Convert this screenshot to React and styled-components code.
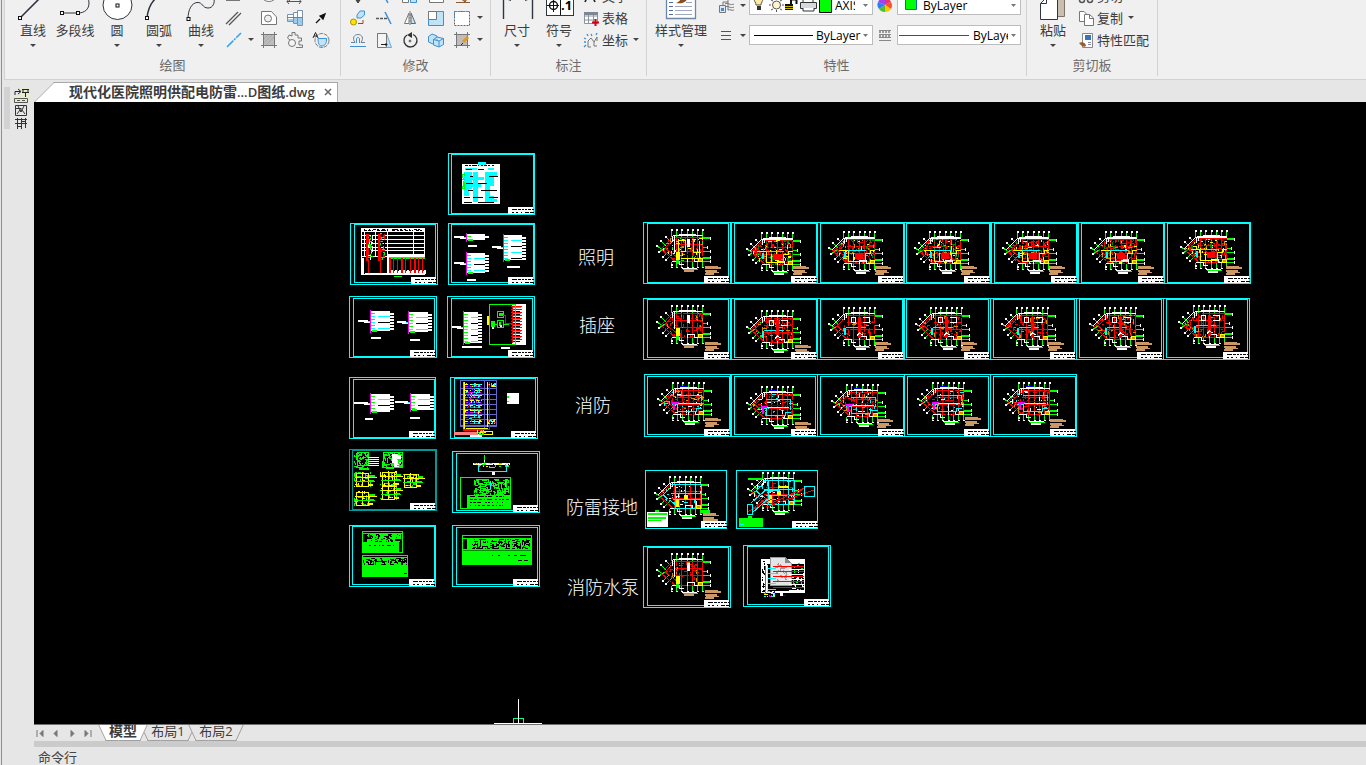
import React, { useState } from "react";
import styled, { createGlobalStyle, css } from "styled-components";

const GlobalStyle = createGlobalStyle`
  * {
    box-sizing: border-box;
  }
  body {
    margin: 0;
    background: #e6e6e6;
    color: #3c3c3c;
    font: 13px/18px "Open Sans", "Noto Sans CJK SC", sans-serif;
  }
  button, select {
    font: inherit;
    color: inherit;
  }
  svg {
    display: block;
  }
`;

const Shell = styled.div`
  display: flex;
  flex-direction: column;
  min-height: 100vh;
  padding-left: 2px;
  background: #e6e6e6;
  box-shadow: inset 1px 0 #e6e6e6, inset 2px 0 #8f8f8f;
`;

/* ribbon */
const RibbonBar = styled.header`
  display: flex;
  height: 80px;
  margin-left: 2px;
  overflow: hidden;
  background: #f0f0f0;
  border-left: 1px solid #d2d2d2;
  border-bottom: 1px solid #d2d2d2;
`;
const Group = styled.section`
  display: flex;
  flex-direction: column;
  justify-content: flex-end;
  flex: none;
  margin-bottom: 3px;
  border-right: 1px solid #d2d2d2;
`;
const GroupBody = styled.div`
  display: flex;
  align-items: flex-end;
  padding: 0 ${(p) => p.$right}px 0 ${(p) => p.$left}px;
`;
const GroupTitle = styled.h2`
  height: 25px;
  margin: 0;
  font-size: 13px;
  font-weight: 400;
  line-height: 29px;
  text-align: center;
  color: #6b6b6b;
`;
const PlainButton = styled.button`
  padding: 0;
  border: 0;
  background: none;
  white-space: nowrap;
`;
const BigButton = styled(PlainButton)`
  display: flex;
  flex-direction: column;
  align-items: center;
  width: ${(p) => p.$width || 42}px;
  line-height: 17px;
`;
const Caret = styled.span`
  display: flex;
  align-items: center;
  justify-content: center;
  width: ${(p) => p.$width || 10}px;
  height: ${(p) => p.$height || 12}px;
  &::after {
    content: "";
    border: 3px solid transparent;
    border-top: 3px solid #444;
    border-bottom: 0;
  }
`;
const CaretGap = styled.span`
  height: 12px;
`;
const ToolGrid = styled.div`
  display: grid;
  grid-template-columns: ${(p) => p.$columns};
  grid-auto-rows: 22px;
`;
const ToolButton = styled(PlainButton)`
  display: flex;
  align-items: center;
  justify-content: center;
`;
const TextTools = styled.div`
  display: flex;
  flex-direction: column;
  margin-left: ${(p) => p.$left}px;
`;
const TextTool = styled(PlainButton)`
  display: flex;
  align-items: center;
  gap: 3px;
  height: 22px;
  padding-bottom: 1px;
`;
const PropGrid = styled.div`
  display: grid;
  grid-template-columns: 22px 12px 124px 24px 124px;
  grid-auto-rows: 20px;
  row-gap: 10px;
  align-items: center;
  justify-items: center;
  padding-bottom: 6px;
`;
const Combo = styled.div`
  position: relative;
  width: 124px;
  height: 20px;
  background: #fff;
  border: 1px solid #bdbdbd;
  svg {
    position: absolute;
    left: 0;
    top: 0;
    pointer-events: none;
  }
`;
const ComboSelect = styled.select`
  width: 100%;
  height: 18px;
  padding: 0 ${(p) => p.$right}px 0 ${(p) => p.$left}px;
  border: 0;
  outline: 0;
  appearance: none;
  background: none;
  font-size: 12px;
  color: #000;
`;

/* workspace */
const Workspace = styled.main`
  display: flex;
  flex: 1;
`;
const Rail = styled.aside`
  display: flex;
  flex: none;
  gap: 3px;
  width: 32px;
  padding: 7px 0 0 2px;
`;
const Grip = styled.div`
  width: 6px;
  height: 42px;
  background: #d2d2d2;
`;
const Desk = styled.div`
  display: flex;
  flex-direction: column;
  flex: 1;
  min-width: 0;
`;
const FileTabs = styled.nav`
  display: flex;
  align-items: flex-end;
  height: 22px;
`;
const FileTab = styled.div`
  position: relative;
  z-index: 0;
  display: flex;
  align-items: center;
  gap: 7px;
  height: 20px;
  padding: 0 4px 0 35px;
  font-weight: 700;
  white-space: nowrap;
  &::before,
  &::after {
    content: "";
    position: absolute;
    z-index: -1;
    top: 0;
    bottom: 0;
    background: #fff;
    border-top: 1px solid #a8a8a8;
  }
  &::before {
    left: 10px;
    width: 60px;
    border-left: 1px solid #a8a8a8;
    transform: skewX(-45deg);
  }
  &::after {
    left: 40px;
    right: 0;
    border-right: 1px solid #a8a8a8;
  }
`;
const FileName = styled.span`
  font-size: 14px;
`;
const Latin = styled.span`
  font-size: 13px;
  font-weight: 600;
`;
const CloseButton = styled(PlainButton)`
  display: flex;
  width: 12px;
  height: 12px;
  align-items: center;
  justify-content: center;
`;
const Canvas = styled.div`
  position: relative;
  flex: 1;
  overflow: hidden;
  background: #000;
`;
const Placed = styled.div`
  position: absolute;
  left: ${(p) => p.$x}px;
  top: ${(p) => p.$y}px;
`;
const CanvasLabel = styled(Placed)`
  color: #fff;
  font-family: "Noto Sans CJK SC", sans-serif;
  font-size: 18px;
  font-weight: 300;
  line-height: 24px;
  white-space: nowrap;
`;
const Crosshair = styled.div`
  position: absolute;
  left: 460px;
  bottom: 0;
`;
const LayoutBar = styled.nav`
  display: flex;
  height: 17px;
  border-top: 1px solid #6f6f6f;
`;
const Pager = styled.div`
  display: flex;
  width: 68px;
`;
const PagerButton = styled(PlainButton)`
  display: flex;
  align-items: center;
  width: 16px;
`;
const LayoutTab = styled(PlainButton)`
  position: relative;
  z-index: ${(p) => (p.$active ? 1 : 0)};
  width: ${(p) => (p.$active ? 42 : 48)}px;
  height: 16px;
  padding-bottom: 4px;
  line-height: 12px;
  ${(p) =>
    p.$active &&
    css`
      font-size: 14px;
      font-weight: 700;
    `}
  &::before,
  &::after {
    content: "";
    position: absolute;
    z-index: -1;
    top: 0;
    bottom: 0;
    background: ${(p) => (p.$active ? "#fff" : "#e6e6e6")};
    border-bottom: 1px solid #a0a0a0;
  }
  &::before {
    left: 0;
    right: 20px;
    border-left: 1px solid #a0a0a0;
    transform: skewX(25deg);
  }
  &::after {
    left: 20px;
    right: 0;
    border-right: 1px solid #a0a0a0;
    transform: skewX(-25deg);
  }
`;
const Splitter = styled.div`
  height: 6px;
  background: #cbcbcb;
`;
const CommandLine = styled.footer`
  height: 18px;
  padding-left: 4px;
  line-height: 20px;
  color: #444;
`;

/* ---------- icons ---------- */
const INK = "#2f3640";
const BLUE = "#3f8fd2";
const PALE = "#bfe4f8";

const Icon = ({ size = 18, children }) => (
  <svg width={size} height={size} viewBox={`0 0 ${size} ${size}`} fill="none" stroke="#777" strokeWidth="1" aria-hidden="true">
    {children}
  </svg>
);
const Node = ({ x, y }) => <rect x={x - 1.5} y={y - 1.5} width="3" height="3" fill="#fff" stroke="#111" />;

const big = {
  line: (
    <>
      <path d="M4 30L26 8" stroke={INK} strokeWidth="1.6" />
      <Node x={4} y={30} />
    </>
  ),
  polyline: (
    <>
      <path d="M4 25H20C27 25 31 21 31 15C31 11 29 8 26 6" stroke={INK} />
      <Node x={4} y={25} />
      <Node x={20} y={25} />
    </>
  ),
  circle: (
    <>
      <circle cx="17.5" cy="17" r="14.5" fill="#fff" stroke={INK} />
      <Node x={17.5} y={17.5} />
    </>
  ),
  arc: (
    <>
      <path d="M5 30C6 20 10 12 18 7" stroke={INK} strokeWidth="1.5" />
      <Node x={5} y={30} />
    </>
  ),
  curve: (
    <>
      <path d="M4 31C4 21 8 15 13 14.500C19 14 18 20 24 20C29 20 31 15 30 10" stroke={INK} />
      <Node x={4.500} y={31} />
    </>
  ),
  dimension: (
    <>
      <path d="M3.500 12V31M32.500 12V31" stroke={INK} strokeWidth="1.400" />
      <path d="M5 11L11 13V9ZM31 11L25 13V9Z" fill={INK} stroke="none" />
    </>
  ),
  symbol: (
    <>
      <rect x="4.500" y="0.500" width="27" height="27" fill="#fff" stroke={INK} />
      <path d="M18.500 1V27M5 17.500H17M11.500 11V24" stroke="#111" />
      <circle cx="11.500" cy="17.500" r="4" stroke="#111" strokeWidth="1.400" />
      <text x="19" y="22" fill="#000" stroke="none" fontSize="13" fontWeight="700">
        .1
      </text>
    </>
  ),
  styles: (
    <>
      <path d="M2.500 0V30.500H31.500V0" fill="#fff" stroke="#6d87a8" strokeWidth="1.300" />
      <path d="M5 14.500H9M5 18.500H9M5 22.500H9M5 26.500H9" stroke="#4d6a9a" />
      <path d="M22 14.500H28M11 18.500H28M11 22.500H28M11 26.500H28" stroke="#9fa8bd" />
      <path d="M12 15C16 16 22 15 23 11L17 9C17 12 15 14 12 15Z" fill="#8a4b1f" stroke="none" />
    </>
  ),
  paste: (
    <>
      <path d="M20 4H28.500V28.500H20Z" fill="#c9bfb0" stroke="#7d7468" />
      <path d="M4.500 15.500L10.500 9.500H21.500V31.500H4.500Z" fill="#fff" stroke={INK} />
      <path d="M4.500 15.500H10.500V9" stroke={INK} />
    </>
  ),
};

const small = {
  rect: <rect x="1.500" y="5.500" width="13" height="8" fill="#fff" />,
  ellipse: <ellipse cx="9" cy="9" rx="7" ry="5.500" fill="#fff" />,
  axis: <path d="M3.500 1V14M1 14.500H15M3 12L1 14.500L3 17M13 12L15 14.500L13 17" stroke="#555" />,
  doubleLine: <path d="M1 15L13 3M4 16L16 4" stroke="#555" strokeWidth="1.300" />,
  region: (
    <>
      <path d="M1.500 2.500H11.500L16.500 8V15.500H1.500Z" fill="#fff" />
      <circle cx="8" cy="9.500" r="3.500" fill="#f0f0f0" />
    </>
  ),
  bolt: (
    <>
      <path d="M1.500 5.500H7.500V12.500H1.500ZM7.500 3.500H11.500V14.500H7.500ZM11.500 1.500H16.500V16.500H11.500Z" fill="#fff" stroke="#7c93ab" />
      <path d="M2 10H7V12H2ZM8 9H11V14H8ZM12 9H16V16H12Z" fill="#9cccec" stroke="none" />
      <path d="M1 8.500H17" stroke={BLUE} />
    </>
  ),
  pointer: <path d="M4 14L8 10M8 7L13 5L11 10Z" fill="#111" stroke="#111" strokeWidth="1.300" />,
  centerLine: <path d="M2 16L16 2" stroke="#38a5e8" strokeWidth="1.600" strokeDasharray="9 1 2 1" />,
  hatch: (
    <>
      <path d="M3 3H15V10C15 13 13 15 10 15H3Z" fill="#bcbcbc" stroke="none" />
      <path d="M1 3.500H17M1 14.500H17M3.500 1V17M14.500 1V17" stroke="#777" />
      <path d="M4 8L8 4M4 12L12 4M6 14L14 6" stroke="#a8a8a8" />
    </>
  ),
  gear: (
    <>
      <path d="M6 1.500H9V4H12V7H15.500V10H13V14H16.500V16.500H10M6 1.500V5L3 4L1.500 7L4 9" />
      <circle cx="6" cy="12" r="3.500" fill="#f4f4f4" />
    </>
  ),
  revcloud: (
    <>
      <circle cx="10" cy="9.500" r="7" strokeDasharray="4 1" />
      <path d="M6 7.500H14.500V9C14.500 13 12 15.500 9 15C7 14.500 6 12 6 7.500Z" fill={PALE} stroke={BLUE} />
      <path d="M1 7L3.500 1.500L6 7M2 5H5" stroke="#222" />
    </>
  ),
  move: <path d="M9 2V15M7 13L9 16L11 13Z" stroke="#444" fill="#444" />,
  trim: <path d="M7 5L13 16" stroke={BLUE} strokeWidth="1.500" />,
  array: (
    <>
      <path d="M1.500 9.500H7.500V15.500H1.500Z" fill="#fff" />
      <path d="M9.500 9.500H15.500V15.500H9.500Z" fill={PALE} stroke={BLUE} />
    </>
  ),
  box: <path d="M2.500 4.500H16.500V15.500H2.500Z" fill="#fff" />,
  brush: <path d="M3 15.500H17M6 10L12 15L14 12L9 7Z" stroke="#8a5a33" fill="#b5743c" />,
  copyObj: (
    <>
      <circle cx="4.500" cy="13" r="3" fill="#ffe600" stroke="#a89000" />
      <path d="M8 6L11 2H15.500V6L12 9H8Z" fill={PALE} stroke={BLUE} />
      <path d="M9 14.500H14V11" stroke="#b03a2e" />
    </>
  ),
  extend: (
    <>
      <path d="M1 9.500H12" stroke="#555" strokeWidth="1.500" strokeDasharray="3 1" />
      <path d="M10 3L16 15" stroke={BLUE} strokeWidth="1.500" />
    </>
  ),
  mirror: (
    <>
      <path d="M8 4V14.500H3.500Z" fill="#fff" />
      <path d="M10 4V14.500H14.500Z" fill={PALE} stroke="#666" />
      <path d="M9 2V16" strokeDasharray="2 1" />
    </>
  ),
  scale: (
    <>
      <path d="M1.500 2.500H16.500V16.500H1.500Z" fill={PALE} stroke={BLUE} />
      <path d="M1.500 2.500H9.500V10.500H1.500Z" fill="#fff" />
    </>
  ),
  select: (
    <>
      <path d="M1.500 2.500H16.500V16.500H1.500Z" fill="#fff" stroke="#666" strokeDasharray="2 1" />
      <path d="M1 2.500H17M1.500 2V8" stroke={BLUE} strokeDasharray="3 1" />
    </>
  ),
  offset: (
    <>
      <path d="M2 11.500H6C3 7 5 3.500 9 3.500C13 3.500 15 7 12 11.500H16" stroke="#6f8296" />
      <path d="M1 15.500H17M7.500 12V8C7.500 6 10.500 6 10.500 8V12" stroke={BLUE} />
    </>
  ),
  stretch: (
    <>
      <path d="M2.500 2.500H11.500L16.500 16.500H2.500Z" fill={PALE} stroke="#6aaed6" />
      <path d="M2.500 2.500H11.500V16.500H2.500Z" fill="#f4f4f4" />
      <path d="M6 13.500H12M10.500 12L12 13.500L10.500 15" stroke="#222" />
    </>
  ),
  rotate: (
    <>
      <path d="M6 4A6.500 6.500 0 1 0 12 3.500" stroke="#333" strokeWidth="1.300" />
      <path d="M11 1L6 4L11 7Z" fill="#333" stroke="none" />
      <circle cx="9" cy="10" r="1" fill="#333" />
    </>
  ),
  solids: (
    <>
      <path d="M1.500 5.500L5 3L10 5V11L6 13L1.500 11Z" fill={PALE} stroke={BLUE} />
      <path d="M6.500 8.500L10 6L16.500 7.500V13.500L12 16L6.500 14ZM6.500 8.500L12 10L16.500 7.500M12 10V16" fill={PALE} stroke={BLUE} />
    </>
  ),
  hatchEdit: (
    <>
      <path d="M3 3H15V15H3Z" fill="#bdbdbd" stroke="none" />
      <path d="M1 3.500H17M1 14.500H17M3.500 1V17M14.500 1V17" stroke="#777" />
      <path d="M10 11L15 6" stroke="#e09a20" strokeWidth="3" />
      <path d="M8 14L10 12" stroke="#222" />
    </>
  ),
};

const text16 = {
  textIcon: <path d="M2 14L7 3L12 14M4 9H10" stroke="#222" strokeWidth="1.600" />,
  table: (
    <>
      <path d="M1.500 2.500H14.500V13.500H1.500ZM1 6H15M1 10H15M5.500 3V13M10.500 3V13" fill="#fff" stroke="#8a94a0" />
      <path d="M1 3.500H15" stroke="#7d8794" strokeWidth="3" />
      <path d="M9 12.500H16M12.500 9V16" stroke="#d0021b" strokeWidth="2" />
    </>
  ),
  coord: (
    <>
      <path d="M5 15V9L8 6L11 10L14 5M14 5V9M5 15H8M11 10V14H14" stroke="#777" />
      <path d="M4 2L5 4M8 2L9 4M14 1L13 3M1 6L3 7M1 10L3 10M1 15L3 13" stroke={BLUE} strokeWidth="1.300" />
    </>
  ),
  cut: (
    <>
      <circle cx="4" cy="12" r="2.500" stroke="#555" strokeWidth="1.500" />
      <circle cx="12" cy="12" r="2.500" stroke="#555" strokeWidth="1.500" />
      <path d="M5 10L12 1M11 10L4 1" stroke="#555" strokeWidth="1.500" />
    </>
  ),
  copy: (
    <>
      <path d="M1.500 1.500H6L9.500 5V11.500H1.500Z" fill="#fff" />
      <path d="M6.500 4.500H11.500L15.500 8V15.500H6.500Z" fill="#fff" />
      <path d="M11.500 4.500V8.500H15.500" />
    </>
  ),
  match: (
    <>
      <path d="M4.500 1.500H14.500V15.500H4.500Z" fill="#fff" stroke="#888" />
      <path d="M7 3H13V8H7Z" fill="#3676b8" stroke="none" />
      <path d="M10 10.500H13M10 12.500H13" stroke="#88a" />
      <path d="M1 11C4 9 8 11 8 14C5 16 3 13 1 11Z" fill="#9b5a26" stroke="none" />
    </>
  ),
};

const drawTools = ["rect", null, "ellipse", "axis", null, "doubleLine", null, "region", "bolt", "pointer", "centerLine", "caret", "hatch", "gear", "revcloud"];
const modifyTools = ["move", "trim", "array", "box", "brush", null, "copyObj", "extend", "mirror", "scale", "select", "caret", "offset", "stretch", "rotate", "solids", "hatchEdit", "caret"];

const Tools = ({ items, columns }) => (
  <ToolGrid $columns={columns}>
    {items.map((name, i) => {
      if (!name) return <span key={i} />;
      if (name === "caret") return <Caret key={i} $height={20} />;
      return (
        <ToolButton key={i} aria-label={name}>
          <Icon>{small[name]}</Icon>
        </ToolButton>
      );
    })}
  </ToolGrid>
);

const BigTool = ({ icon, label, caret = true, width }) => (
  <BigButton $width={width}>
    <Icon size={34}>{big[icon]}</Icon>
    {label}
    {caret ? <Caret /> : <CaretGap />}
  </BigButton>
);

const LabelTool = ({ icon, label, caret }) => (
  <TextTool>
    <Icon size={16}>{text16[icon]}</Icon>
    {label}
    {caret && <Caret />}
  </TextTool>
);

const PropCombo = ({ label, value, left, right, children }) => (
  <Combo>
    <ComboSelect aria-label={label} $left={left} $right={right}>
      <option>{value}</option>
    </ComboSelect>
    <svg width="122" height="18" viewBox="0 0 122 18" fill="none" aria-hidden="true">
      {children}
      <path d="M113 8H118L115.500 11Z" fill="#777" />
    </svg>
  </Combo>
);

const Ribbon = () => (
  <RibbonBar>
    <Group>
      <GroupBody $left={7} $right={6}>
        <BigTool icon="line" label="直线" />
        <BigTool icon="polyline" label="多段线" caret={false} />
        <BigTool icon="circle" label="圆" />
        <BigTool icon="arc" label="圆弧" />
        <BigTool icon="curve" label="曲线" />
        <Tools items={drawTools} columns="24px 10px 26px 26px 26px" />
      </GroupBody>
      <GroupTitle>绘图</GroupTitle>
    </Group>
    <Group>
      <GroupBody $left={4} $right={5}>
        <Tools items={modifyTools} columns="repeat(5, 26px) 10px" />
      </GroupBody>
      <GroupTitle>修改</GroupTitle>
    </Group>
    <Group>
      <GroupBody $left={5} $right={5}>
        <BigTool icon="dimension" label="尺寸" />
        <BigTool icon="symbol" label="符号" />
        <TextTools $left={3}>
          <LabelTool icon="textIcon" label="文字" />
          <LabelTool icon="table" label="表格" />
          <LabelTool icon="coord" label="坐标" caret />
        </TextTools>
      </GroupBody>
      <GroupTitle>标注</GroupTitle>
    </Group>
    <Group>
      <GroupBody $left={0} $right={5}>
        <BigTool icon="styles" label="样式管理" width={68} />
        <PropGrid>
          <Icon>
            <path d="M2.500 9.500H8.500V16.500H2.500Z" fill="#dfe8f2" />
            <path d="M4 12H7V15H4Z" fill={BLUE} stroke="none" />
            <path d="M6 9V6H11M8 8C11 6 13 10 17 8M8 11C11 9 13 13 17 11M11 14C13 13 15 15 17 14M11 3V14" />
          </Icon>
          <Caret />
          <PropCombo label="图层" value="AXIS" left={85} right={17}>
            <path d="M6 9C6 6 4 6 4 2C4 -2 13 -2 13 2C13 6 11 6 11 9Z" fill="#ffe9a0" stroke="#555" />
            <path d="M7 10H11V14H7Z" fill="#333" />
            <circle cx="26.500" cy="9" r="4" fill="#fff3d0" stroke="#555" />
            <path d="M26.500 2V4M26.500 14V16M19 9H21M32 9H34M21 4L23 5M30 13L32 14M21 14L23 13M30 5L32 4" stroke="#555" />
            <path d="M35 8H43V14H35Z" fill="#111" />
            <path d="M35 10.500H43M35 12.500H43" stroke="#c8b400" />
            <path d="M41 8V3.500H46.500V8" stroke="#111" strokeWidth="2" />
            <path d="M50.500 6.500H66.500V12.500H50.500Z" fill="#d5d8dc" stroke="#333" />
            <path d="M53 6V0H63V6M53 12V15H64V12" fill="#fff" stroke="#333" />
            <path d="M69.500 3.500H81.500V16.500H69.500Z" fill="#0f0" stroke="#000" />
          </PropCombo>
          <Icon>
            <g stroke="none">
              <path d="M9 9L2 6A7 7 0 0 1 9 2Z" fill="#a53df0" />
              <path d="M9 9V2A7 7 0 0 1 15 6Z" fill="#f0306a" />
              <path d="M9 9L15 6A7 7 0 0 1 15 13Z" fill="#f5532a" />
              <path d="M9 9L15 13A7 7 0 0 1 9 16Z" fill="#ffc400" />
              <path d="M9 9V16A7 7 0 0 1 3 13Z" fill="#4cc22e" />
              <path d="M9 9L3 13A7 7 0 0 1 2 6Z" fill="#2f7df0" />
            </g>
          </Icon>
          <PropCombo label="颜色" value="ByLayer" left={25} right={17}>
            <path d="M7.500 2.500H18.500V13.500H7.500Z" fill="#0f0" stroke="#0a64c8" />
          </PropCombo>
          <Icon>
            <path d="M4 5.500H14M4 9.500H14M4 13.500H14" stroke="#555" />
          </Icon>
          <Caret />
          <PropCombo label="线宽" value="ByLayer" left={66} right={10}>
            <path d="M4 9.500H63" stroke="#000" />
          </PropCombo>
          <Icon>
            <path d="M3 4.500H15M3 8.500H15M3 11.500H15M3 14.500H15" stroke="#888" />
            <path d="M3 6H15M3 10H15" stroke="#444" strokeDasharray="2 1" />
          </Icon>
          <PropCombo label="线型" value="ByLayer" left={75} right={12}>
            <path d="M1 9.500H71" stroke="#f00" />
          </PropCombo>
        </PropGrid>
      </GroupBody>
      <GroupTitle>特性</GroupTitle>
    </Group>
    <Group>
      <GroupBody $left={5} $right={8}>
        <BigTool icon="paste" label="粘贴" />
        <TextTools $left={4}>
          <LabelTool icon="cut" label="剪切" />
          <LabelTool icon="copy" label="复制" caret />
          <LabelTool icon="match" label="特性匹配" />
        </TextTools>
      </GroupBody>
      <GroupTitle>剪切板</GroupTitle>
    </Group>
  </RibbonBar>
);

/* ---------- drawings on the canvas ---------- */
const CY = "#00ffff";
const GR = "#00ff00";
const RD = "#ff0000";
const YE = "#ffff00";
const MG = "#ff00ff";
const BR = "#cc9966";
const OR = "#d99000";
const WH = "#ffffff";

const R = ({ b, c }) => <rect x={b[0]} y={b[1]} width={b[2]} height={b[3]} fill={c} />;
const Box = ({ b, c }) => (
  <rect x={b[0] + 0.5} y={b[1] + 0.5} width={b[2] - 1} height={b[3] - 1} fill="none" stroke={c} />
);
const P = ({ d, c }) => <path d={d} fill="none" stroke={c} />;

// small seeded generator, so a drawing looks the same on every render
const random = (seed) => {
  let s = seed * 7919 + 17;
  return () => {
    s = (s * 1103515245 + 12345) % 2147483648;
    return s / 2147483648;
  };
};

const Specks = ({ b, seed, colors, n, max = 4, inside }) => {
  const rnd = random(seed);
  const out = [];
  for (let i = 0; i < n; i++) {
    const x = b[0] + Math.floor(rnd() * b[2]);
    const y = b[1] + Math.floor(rnd() * b[3]);
    const len = 1 + Math.floor(rnd() * max);
    const flat = rnd() > 0.5;
    const c = colors[Math.floor(rnd() * colors.length)];
    if (inside && !inside(x, y)) continue;
    const w = flat ? Math.min(len, b[0] + b[2] - x) : 1;
    const h = flat ? 1 : Math.min(len, b[1] + b[3] - y);
    out.push(<rect key={i} x={x} y={y} width={w} height={h} fill={c} />);
  }
  return <g>{out}</g>;
};

const TitleBlock = ({ w, h }) => (
  <g>
    <R b={[w - 27, h - 8, 25, 7]} c={WH} />
    <path
      d={`M${w - 23} ${h - 5.5}h5m1 0h3m1 0h2m1 0h2m1 0h3m1 0h2M${w - 23} ${h - 2.5}h2m2 0h2m3 0h1m3 0h4m1 0h4`}
      stroke="#000"
      fill="none"
    />
  </g>
);

const axes = [28, 33, 38, 44, 49, 54, 59];
const rays = [
  [23, 15, 28, 20],
  [18, 19, 23, 24],
  [14, 24, 20, 28],
  [16, 30, 22, 26],
  [20, 35, 26, 29],
  [23, 38, 29, 32],
];
const inPlan = (x, y) => {
  if (x > 59) return false;
  const left = y < 26 ? 29 - (y - 14) : 17 + (y - 26) * 1.2;
  return x >= left;
};

const floorKinds = {
  lightA: { colors: [RD, RD, YE, YE, GR, OR, "#000"], n: 150 },
  light: { colors: [RD, RD, RD, "#000", YE, "#008a00", OR], n: 230 },
  socket: { colors: [RD, RD, "#000", OR], n: 130 },
  socketA: { colors: [RD, RD, RD, OR, "#000"], n: 80 },
  fire: { colors: [RD, RD, CY, "#000", WH, OR], n: 110 },
  ground: { colors: [CY, RD, WH, CY, "#000"], n: 60 },
};

const Plan = ({ dx = 0, dy = 0, kind, seed, notesX = 62, notesY = 44, notes = true }) => {
  const { colors, n } = floorKinds[kind];
  const first = kind === "lightA" || kind === "socketA";
  return (
    <g>
      <g transform={`translate(${dx} ${dy})`}>
        {axes.map((x) => (
          <g key={x}>
            <R b={[x, 8, 1, 7]} c={GR} />
            <R b={[x, 40, 1, 5]} c={GR} />
            <R b={[x, 7, 2, 2]} c={WH} />
            <R b={[x, 45, 2, 1]} c={WH} />
          </g>
        ))}
        {[16, 25, 29, 35, 39].map((y, i) => (
          <g key={y}>
            <R b={[60, y - (i === 0 ? 1 : 0), i === 1 ? 4 : 7, i % 3 === 0 ? 2 : 1]} c={GR} />
            <R b={[i === 1 ? 64 : 67, y - 1, 1, 3]} c={WH} />
          </g>
        ))}
        {rays.map(([x1, y1, x2, y2]) => (
          <g key={y1}>
            <P d={`M${x1} ${y1}L${x2} ${y2}`} c={GR} />
            <R b={[x1 - 1, y1 - 1, 2, 2]} c={WH} />
          </g>
        ))}
        <R b={[28, 42, 2, 2]} c={WH} />
        {/* walls */}
        <P d="M30 15L18 27L33 40" c={RD} />
        <P d="M32 16L22 26L34 35" c={kind === "ground" ? CY : RD} />
        {!first && <P d="M29 14L17 26" c={WH} />}
        <R b={[29, 15, 31, 1]} c={RD} />
        <R b={[33, 39, 27, 1]} c={RD} />
        <R b={[32, 22, 28, 1]} c={RD} />
        <R b={[30, 29, 30, 1]} c={RD} />
        {[33, 38, 44, 49, 54, 59].map((x) => (
          <R key={x} b={[x, 15, 1, 25]} c={RD} />
        ))}
        <Specks b={[16, 15, 44, 25]} seed={seed} colors={colors} n={n} inside={inPlan} />
        <P d="M30 13.500H60" c={WH} />
        <R b={[36, 12, 17, 2]} c={WH} />
        <P d="M29.500 14V20M31.500 14V18M29 39.500H36V42H41M44 40V36H51V40M52 39.500H59" c={WH} />
        {first && (
          <>
            <R b={[44, 17, 3, 8]} c={WH} />
            <R b={[31, 16, 1, 15]} c={WH} />
            <R b={[33, 30, 4, 8]} c={YE} />
            <R b={[33, 38, 3, 4]} c={GR} />
          </>
        )}
        {kind === "lightA" && <P d="M35.500 17V37M36 18.500H42V30M50.500 17V30H58M38 36.500H56V20" c={YE} />}
        {kind === "light" && (
          <>
            <R b={[40, 29, 8, 6]} c={RD} />
            <P d="M24 26.500H33V37H38V29M50 37V29H55V26H60" c={YE} />
            <R b={[33, 26, 18, 1]} c={CY} />
            <R b={[29, 28, 2, 6]} c={CY} />
            <R b={[39, 37, 12, 1]} c={YE} />
            <R b={[29, 14, 31, 1]} c={WH} />
          </>
        )}
        {kind === "socket" && (
          <>
            <R b={[31, 27, 20, 1]} c={CY} />
            <R b={[29, 28, 2, 7]} c={CY} />
            <R b={[43, 17, 3, 21]} c={RD} />
            <P d="M36 17.500H40V22H36ZM48 17.500H54V22H48M42 35.500L44.500 33L48 35" c={WH} />
          </>
        )}
        {kind === "fire" && (
          <>
            <P d="M33 20.500H57V30M28 29.500H33V36H52V33H58" c={CY} />
            <R b={[30, 26, 28, 1]} c="#0000ff" />
            <R b={[28, 27, 7, 2]} c={MG} />
            <R b={[34, 28, 22, 1]} c={YE} />
            <R b={[29, 28, 2, 7]} c={MG} />
            <R b={[36, 11, 8, 1]} c="#0000ff" />
          </>
        )}
        {kind === "ground" && (
          <>
            <P d="M30 15.500H60V39.500H33M34.500 16V39M44.500 16V30M54.500 16V39M32 30.500H60M30 24.500H60" c={CY} />
            <R b={[43, 26, 4, 4]} c={YE} />
            <R b={[35, 30, 3, 8]} c={YE} />
          </>
        )}
        <R b={[55, 36, 5, 4]} c={YE} />
        <R b={[56, 37, 3, 2]} c={OR} />
        <R b={[39, 46, 15, 1]} c={WH} />
        <R b={[40, 47, 15, 1]} c={GR} />
        <R b={[41, 48, 10, 2]} c={first ? BR : WH} />
      </g>
      {notes && (
        <g transform={`translate(${notesX} ${notesY})`}>
          <R b={[0, 0, 13, 1]} c={BR} />
          <R b={[0, 1, 16, 2]} c={BR} />
          <R b={[0, 4, 12, 2]} c={BR} />
          <R b={[1, 6, 13, 1]} c={BR} />
          <R b={[0, 7, 9, 2]} c={BR} />
        </g>
      )}
    </g>
  );
};

// distribution diagram: feeder on the left, bus bar, outgoing ways on the right
const Feeder = ({ b, lead = 11, cap }) => {
  const [x, y, w, h] = b;
  const ways = [];
  for (let i = 2; i < h - 1; i += 3) ways.push(i);
  return (
    <g>
      <R b={[x, y, w - 4, h]} c={WH} />
      {ways.map((i) => (
        <g key={i}>
          <R b={[x + w - 4, y + i, 4, 2]} c={WH} />
          <R b={[x + 1, y + i, 4, 1]} c={i % 2 ? CY : GR} />
          {i % 3 === 2 && i % 2 === 1 && <R b={[x + 8, y + i, w - 12, 1]} c={i % 4 === 1 ? CY : "#000"} />}
        </g>
      ))}
      <R b={[x + 2, y + h - 1, 5, 2]} c={GR} />
      <R b={[x, y - 1, 1, h + 3]} c={MG} />
      <R b={[x - lead, y + Math.floor(h / 2) - 1, lead - 2, 2]} c={WH} />
      <R b={[x - 6, y + Math.floor(h / 2) + 1, 6, 1]} c={WH} />
      <R b={[x - 2, y + Math.floor(h / 2), 2, 1]} c={CY} />
      {cap && <R b={cap} c={WH} />}
    </g>
  );
};

const Dashes = ({ b, rows, seed }) => {
  const rnd = random(seed);
  const out = [];
  for (let r = 0; r < rows; r++) {
    const y = b[1] + Math.floor((r * b[3]) / rows);
    for (let x = b[0]; x < b[0] + b[2] - 3; x += 3 + Math.floor(rnd() * 3)) {
      out.push(<rect key={`${r}-${x}`} x={x} y={y} width={1 + Math.floor(rnd() * 3)} height="1" fill="#000" />);
    }
  }
  return <g>{out}</g>;
};

const Cabinet = ({ x, y, seed }) => (
  <g>
    <Specks b={[x, y, 17, 15]} seed={seed} colors={[GR, GR, YE]} n={36} max={4} />
    <Box b={[x + 2, y + 1, 13, 14]} c={YE} />
    <R b={[x + 8, y, 1, 15]} c={YE} />
    <R b={[x + 1, y + 5, 22, 1]} c={YE} />
    <R b={[x + 1, y + 9, 20, 1]} c={GR} />
    <R b={[x + 16, y + 3, 5, 2]} c={GR} />
    <R b={[x + 15, y + 8, 5, 2]} c={GR} />
    <R b={[x + 15, y + 12, 4, 2]} c={YE} />
  </g>
);

const leftArt = {
  list: (
    <>
      <R b={[14, 11, 38, 40]} c={WH} />
      <R b={[30, 9, 8, 3]} c={CY} />
      <R b={[16, 19, 8, 24]} c={CY} />
      <R b={[25, 19, 5, 30]} c={CY} />
      <R b={[24, 24, 12, 3]} c={CY} />
      <R b={[24, 31, 9, 3]} c={CY} />
      <R b={[37, 19, 9, 27]} c={CY} />
      <R b={[40, 19, 9, 4]} c={CY} />
      <R b={[37, 46, 12, 3]} c={CY} />
      <R b={[17, 15, 12, 2]} c={CY} />
      <R b={[40, 15, 6, 2]} c={CY} />
      <R b={[42, 33, 4, 10]} c={WH} />
      <R b={[21, 36, 4, 10]} c={WH} />
      <Specks b={[14, 20, 3, 16]} seed={3} colors={[GR]} n={20} />
      <Dashes b={[17, 12, 34, 1]} rows={1} seed={4} />
      <path d="M18 16.500h6m6 0h6M22 23.500h3m16 0h9M18 30.500h7m5 0h9M20 37.500h5m8 0h16M16 44.500h6m3 0h10m6 0h9M16 49.500h8m6 0h16" stroke="#000" />
    </>
  ),
  schedule: (
    <>
      <Box b={[11, 5, 64, 47]} c={WH} />
      {[8, 12, 16, 20, 24, 27, 33].map((y) => (
        <R key={y} b={[11, y, 64, 1]} c={WH} />
      ))}
      {[14, 25, 37, 63].map((x) => (
        <R key={x} b={[x, 5, 1, 29]} c={WH} />
      ))}
      <R b={[12, 35, 2, 16]} c={WH} />
      <R b={[15, 50, 22, 1]} c={WH} />
      <R b={[37, 31, 37, 20]} c={WH} />
      <R b={[12, 6, 62, 2]} c={WH} />
      <Dashes b={[14, 6, 60, 2]} rows={2} seed={8} />
      <R b={[16, 11, 3, 27]} c={RD} />
      <R b={[28, 11, 3, 27]} c={RD} />
      <R b={[18, 38, 1, 12]} c={RD} />
      <R b={[30, 38, 1, 12]} c={RD} />
      <Specks b={[18, 10, 5, 27]} seed={11} colors={[GR, GR, WH, "#000"]} n={50} />
      <Specks b={[30, 10, 5, 27]} seed={12} colors={[GR, GR, RD, "#000"]} n={50} />
      <R b={[39, 34, 36, 14]} c="#000" />
      <R b={[39, 34, 36, 2]} c={GR} />
      {[39, 43, 47, 51, 55, 60, 64, 68, 72].map((x, i) => (
        <g key={x}>
          <R b={[x, 35, i % 3 ? 1 : 2, 15]} c={RD} />
          <R b={[x + 2, 47, 2, 4]} c={WH} />
        </g>
      ))}
      <Dashes b={[38, 29, 36, 1]} rows={1} seed={6} />
      <R b={[44, 53, 8, 1]} c={GR} />
    </>
  ),
  feeders3: (
    <>
      <Feeder b={[18, 11, 23, 6]} lead={12} cap={[20, 22, 9, 2]} />
      <Feeder b={[18, 30, 23, 20]} lead={12} cap={[19, 56, 9, 2]} />
      <Feeder b={[55, 12, 23, 25]} lead={11} cap={[59, 43, 13, 2]} />
    </>
  ),
  feeders2: (
    <>
      <Feeder b={[21, 15, 24, 20]} lead={12} cap={[22, 41, 10, 2]} />
      <Feeder b={[59, 16, 24, 20]} lead={11} cap={[61, 43, 10, 2]} />
    </>
  ),
  control: (
    <>
      <Feeder b={[16, 16, 19, 31]} lead={11} cap={[15, 50, 20, 2]} />
      <R b={[65, 8, 14, 41]} c={WH} />
      <R b={[63, 13, 10, 33]} c="#000" />
      {[10, 13, 16, 19, 22, 25, 28, 31, 34, 37, 40, 43].map((y) => (
        <g key={y}>
          <R b={[64, y, 11, 1]} c={RD} />
          <R b={[66, y + 1, 8, 1]} c={y % 2 ? WH : GR} />
        </g>
      ))}
      <R b={[65, 10, 1, 37]} c={RD} />
      <Box b={[42, 8, 27, 41]} c={GR} />
      <Box b={[50, 15, 7, 7]} c={GR} />
      <Box b={[50, 24, 7, 8]} c={GR} />
      <R b={[52, 17, 4, 3]} c={GR} />
      <R b={[52, 26, 2, 4]} c={GR} />
      <R b={[53, 29, 2, 2]} c={WH} />
      <P d="M56 19.500H58.500V27.500H65" c={RD} />
      <P d="M47 28.500H50M57 28.500H62" c={GR} />
      <R b={[40, 20, 2, 9]} c={YE} />
      <R b={[44, 25, 4, 6]} c={GR} />
      <R b={[45, 31, 2, 2]} c={WH} />
      <R b={[54, 51, 9, 2]} c={WH} />
    </>
  ),
  feeders2b: (
    <>
      <Feeder b={[21, 17, 24, 18]} lead={16} cap={[16, 41, 8, 2]} />
      <Feeder b={[61, 17, 24, 16]} lead={15} cap={[61, 40, 10, 2]} />
    </>
  ),
  system: (
    <>
      <Box b={[10, 3, 37, 47]} c="#6666cc" />
      {[7, 13, 18, 23, 28, 33, 38, 44].map((y) => (
        <g key={y}>
          <R b={[10, y + 4, 37, 1]} c="#6666cc" />
          <R b={[15, y, 17, 1]} c={YE} />
          <R b={[15, y + 2, 16, 1]} c={MG} />
          <R b={[18, y, 2, 3]} c="#0000ff" />
          <R b={[24, y - 1, 1, 4]} c={CY} />
          <R b={[28, y, 2, 3]} c={CY} />
        </g>
      ))}
      <Specks b={[15, 6, 16, 40]} seed={31} colors={[CY, "#0000ff", RD, MG, YE, "#000"]} n={80} max={3} />
      <R b={[13, 5, 1, 47]} c={CY} />
      <R b={[14, 5, 1, 47]} c={YE} />
      <R b={[34, 4, 1, 48]} c="#6666cc" />
      <R b={[37, 5, 1, 45]} c={YE} />
      <R b={[39, 5, 1, 45]} c={RD} />
      <Specks b={[38, 6, 8, 4]} seed={32} colors={[CY, YE, RD]} n={16} />
      <Specks b={[38, 42, 8, 5]} seed={33} colors={[CY, YE, RD]} n={16} />
      <P d="M13 52.500H39V49M13 53.500H33" c={RD} />
      <R b={[16, 51, 22, 1]} c={YE} />
      <R b={[4, 55, 24, 3]} c="#ff8080" />
      <Box b={[30, 54, 13, 4]} c={YE} />
      <R b={[20, 58, 12, 2]} c={WH} />
      <Specks b={[27, 53, 9, 5]} seed={34} colors={[CY, GR, YE, WH]} n={16} />
      <R b={[57, 16, 12, 11]} c={WH} />
      <R b={[57, 19, 2, 2]} c={GR} />
      <R b={[57, 24, 2, 1]} c={GR} />
    </>
  ),
  cabinets: (
    <>
      <Specks b={[5, 3, 14, 16]} seed={41} colors={[GR]} n={62} />
      <Box b={[8, 3, 12, 14]} c={GR} />
      {[8, 10, 12, 14, 16].map((y) => (
        <R key={y} b={[19, y, 11, 1]} c={WH} />
      ))}
      <Specks b={[33, 3, 20, 16]} seed={42} colors={[GR]} n={80} />
      <Box b={[34, 3, 20, 16]} c={GR} />
      <R b={[43, 5, 9, 9]} c={WH} />
      <R b={[45, 14, 5, 4]} c={WH} />
      <Specks b={[48, 4, 6, 14]} seed={46} colors={[GR]} n={14} />
      <R b={[10, 19, 10, 2]} c={GR} />
      <R b={[37, 19, 8, 1]} c={GR} />
      <Cabinet x={5} y={23} seed={43} />
      <Cabinet x={31} y={22} seed={44} />
      <Cabinet x={53} y={24} seed={45} />
      <Cabinet x={5} y={42} seed={47} />
      <Cabinet x={31} y={36} seed={48} />
    </>
  ),
  lightning: (
    <>
      <R b={[21, 12, 37, 2]} c={WH} />
      <Specks b={[22, 12, 35, 4]} seed={50} colors={[GR, YE, GR, "#000"]} n={34} />
      <R b={[32, 4, 1, 9]} c={GR} />
      <R b={[32, 9, 1, 2]} c={WH} />
      <P d="M26.500 14V20.500H54.500V14M37 16.500H43" c={CY} />
      <R b={[40, 21, 3, 3]} c={WH} />
      <Box b={[8, 26, 51, 32]} c={GR} />
      <Specks b={[22, 28, 35, 16]} seed={51} colors={[GR]} n={140} max={5} />
      <P d="M38.500 30V38M53.500 30H55M53.500 30V36" c={CY} />
      <R b={[15, 44, 44, 14]} c={GR} />
      <Dashes b={[18, 45, 40, 12]} rows={4} seed={52} />
    </>
  ),
  notesA: (
    <>
      <Box b={[13, 6, 41, 22]} c={GR} />
      <R b={[14, 17, 36, 10]} c={GR} />
      <Specks b={[18, 9, 34, 8]} seed={60} colors={[GR]} n={120} />
      <R b={[14, 8, 39, 1]} c={GR} />
      <Dashes b={[20, 20, 30, 6]} rows={1} seed={61} />
      <R b={[13, 30, 46, 22]} c={GR} />
      <R b={[14, 31, 44, 1]} c="#000" />
      <Specks b={[14, 33, 44, 7]} seed={62} colors={["#000"]} n={75} />
      <R b={[55, 48, 3, 1]} c="#000" />
    </>
  ),
  notesB: (
    <>
      <R b={[10, 10, 70, 30]} c={GR} />
      <R b={[11, 11, 68, 2]} c="#000" />
      <Specks b={[20, 14, 58, 10]} seed={70} colors={["#000"]} n={150} />
      <R b={[11, 14, 4, 10]} c="#000" />
      <R b={[11, 25, 68, 1]} c="#008a00" />
      <path d="M40 30.500h1m5 0h2m8 0h2m4 0h3m3 0h6M66 35.500h4m2 0h4" stroke="#000" />
    </>
  ),
  lightningPlan: (
    <>
      <Plan kind="ground" seed={81} dx={-4} dy={-1} notes={false} />
      <R b={[2, 42, 21, 15]} c={WH} />
      <R b={[3, 43, 19, 2]} c={GR} />
      <R b={[3, 47, 18, 2]} c={GR} />
      <R b={[3, 50, 13, 1]} c={GR} />
      <R b={[10, 40, 4, 2]} c={GR} />
      <R b={[55, 40, 10, 3]} c={GR} />
      <R b={[58, 43, 13, 2]} c={BR} />
      <R b={[58, 45, 16, 1]} c={BR} />
      <R b={[58, 47, 11, 2]} c={BR} />
      <R b={[58, 49, 15, 2]} c={BR} />
    </>
  ),
  earthPlan: (
    <>
      <Plan kind="ground" seed={82} dx={-2} dy={-5} notes={false} />
      <P d="M12 42L31 28M16 40L36 29M30 37L78 20M34 34L68 18M60 24L70 17" c={RD} />
      <Box b={[68, 16, 11, 11]} c={CY} />
      <Box b={[11, 34, 6, 11]} c={CY} />
      <P d="M28 20.500H44M15 33L31 19M16 43L33 28" c={CY} />
      <R b={[12, 8, 14, 2]} c={GR} />
      <R b={[3, 48, 24, 9]} c={GR} />
      <R b={[12, 46, 4, 2]} c={GR} />
      <R b={[42, 16, 11, 2]} c={YE} />
      <R b={[4, 54, 4, 1]} c={CY} />
    </>
  ),
  pumpTable: (
    <>
      <R b={[18, 14, 44, 34]} c={WH} />
      <R b={[24, 19, 37, 27]} c="#000" />
      <Specks b={[19, 16, 4, 31]} seed={90} colors={["#000"]} n={26} max={2} />
      <Specks b={[46, 18, 15, 28]} seed={91} colors={[GR, WH, "#000"]} n={50} />
      <path d="M27 12H42L48 18V40H27Z" fill="#e4e4e4" stroke="#999" />
      <path d="M42 12V18H48Z" fill="#888" />
      <Specks b={[31, 18, 13, 18]} seed={92} colors={["#999"]} n={34} />
      {[22, 27, 32, 37, 43].map((y) => (
        <g key={y}>
          <R b={[30, y - 1, 31, 1]} c={RD} />
          <R b={[24, y + 1, 9, 1]} c={CY} />
          <R b={[46, y + 2, 15, 1]} c={WH} />
        </g>
      ))}
      <R b={[22, 21, 1, 28]} c={MG} />
      <R b={[24, 20, 1, 28]} c={YE} />
      <Specks b={[21, 46, 11, 6]} seed={93} colors={[YE, "#0000ff", CY, MG]} n={28} />
      <R b={[37, 48, 3, 3]} c={WH} />
      <R b={[40, 50, 3, 1]} c="#0000ff" />
    </>
  ),
};

const floor = (kind, seed, dx, dy, notesX, notesY) => (
  <Plan kind={kind} seed={seed} dx={dx} dy={dy} notesX={notesX} notesY={notesY} />
);

// x, y on the canvas; inner frame insets are left, top, right, bottom
const sheets = [
  { x: 414, y: 51, w: 87, inset: [3, 1, 1, 1], art: leftArt.list },
  { x: 316, y: 121, w: 88, inset: [4, 1, 2, 2], art: leftArt.schedule },
  { x: 414, y: 121, w: 87, inset: [3, 1, 1, 2], art: leftArt.feeders3 },
  { x: 315, y: 194, w: 88, inset: [4, 2, 2, 1], art: leftArt.feeders2 },
  { x: 413, y: 194, w: 88, inset: [4, 2, 2, 1], art: leftArt.control },
  { x: 315, y: 275, w: 87, inset: [4, 2, 1, 1], art: leftArt.feeders2b },
  { x: 416, y: 275, w: 88, inset: [4, 1, 2, 1], art: leftArt.system },
  { x: 315, y: 347, w: 88, inset: [3, 1, 1, 1], color: "#009999", art: leftArt.cabinets },
  { x: 418, y: 349, w: 88, inset: [4, 2, 2, 2], art: leftArt.lightning },
  { x: 315, y: 423, w: 87, inset: [3, 1, 1, 2], art: leftArt.notesA },
  { x: 418, y: 423, w: 88, inset: [4, 2, 2, 2], art: leftArt.notesB },

  { x: 609, y: 120, w: 88, inset: [4, 1, 2, 1], art: floor("lightA", 1, 0, 0) },
  { x: 697, y: 120, w: 87, art: floor("light", 2, 2, 3) },
  { x: 783, y: 120, w: 88, art: floor("light", 3, -2, 2, 58) },
  { x: 869, y: 120, w: 88, art: floor("light", 4, -2, 2, 58) },
  { x: 957, y: 120, w: 87, art: floor("light", 5, -2, 2, 58) },
  { x: 1044, y: 120, w: 87, art: floor("light", 6, -1, 2, 60) },
  { x: 1130, y: 120, w: 87, art: floor("light", 7, 3, 1, 62) },

  { x: 609, y: 196, w: 88, inset: [4, 1, 2, 2], art: floor("socketA", 11, 0, 0) },
  { x: 697, y: 196, w: 87, inset: [3, 1, 1, 2], art: floor("socket", 12, 2, 5, 64, 47) },
  { x: 783, y: 196, w: 88, inset: [3, 1, 2, 2], art: floor("socket", 13, -2, 2, 58) },
  { x: 869, y: 196, w: 88, inset: [3, 1, 2, 2], art: floor("socket", 14, -1, 2, 58) },
  { x: 956, y: 196, w: 87, inset: [3, 1, 2, 2], art: floor("socket", 15, -2, 2, 58) },
  { x: 1042, y: 196, w: 88, inset: [3, 1, 2, 2], art: floor("socket", 16, 0, 2, 60) },
  { x: 1129, y: 196, w: 87, inset: [3, 1, 2, 2], art: floor("socket", 17, 2, 0, 61) },

  { x: 610, y: 272, w: 87, h: 63, inset: [3, 2, 1, 2], art: floor("fire", 21, 0, 1, 61) },
  { x: 697, y: 272, w: 87, h: 63, inset: [3, 2, 2, 2], art: floor("fire", 22, 2, 5, 64, 48) },
  { x: 783, y: 272, w: 88, h: 63, inset: [3, 2, 1, 2], art: floor("fire", 23, 1, 3, 60, 45) },
  { x: 870, y: 272, w: 87, h: 63, inset: [3, 2, 2, 2], art: floor("fire", 24, 0, 1, 61, 43) },
  { x: 956, y: 272, w: 87, h: 63, inset: [3, 2, 1, 2], art: floor("fire", 25, 0, 1, 60, 45) },

  { x: 611, y: 368, w: 82, h: 59, art: leftArt.lightningPlan, inset: null },
  { x: 702, y: 368, w: 82, h: 59, art: leftArt.earthPlan, inset: null },
  { x: 609, y: 444, w: 88, inset: [4, 1, 2, 2], art: floor("socketA", 31, 0, 0) },
  { x: 709, y: 443, w: 88, inset: [4, 1, 2, 2], art: leftArt.pumpTable },
];

const labels = [
  { x: 544, y: 142, text: "照明" },
  { x: 545, y: 210, text: "插座" },
  { x: 541, y: 290, text: "消防" },
  { x: 532, y: 392, text: "防雷接地" },
  { x: 533, y: 472, text: "消防水泵" },
];

const Sheet = ({ x, y, w, h = 62, inset = [3, 1, 1, 1], color = CY, art }) => (
  <Placed $x={x} $y={y}>
    <svg width={w} height={h} viewBox={`0 0 ${w} ${h}`} shapeRendering="crispEdges" aria-hidden="true">
      <Box b={[0, 0, w, h]} c={color} />
      {inset && <Box b={[inset[0], inset[1], w - inset[0] - inset[2], h - inset[1] - inset[3]]} c={color} />}
      {art}
      <TitleBlock w={inset ? w : w + 1} h={h} />
    </svg>
  </Placed>
);

const pagers = [
  ["第一页", "M3 4V11M9 4.500L6 7.500L9 10.500Z"],
  ["上一页", "M7 4.500L4 7.500L7 10.500Z"],
  ["下一页", "M5 4.500L8 7.500L5 10.500Z"],
  ["最后一页", "M3 4.500L6 7.500L3 10.500ZM9 4V11"],
];

const App = () => {
  const [layout, setLayout] = useState("模型");

  return (
    <>
      <GlobalStyle />
      <Shell>
        <Ribbon />
        <Workspace>
          <Rail>
            <Grip />
            <svg width="17" height="43" viewBox="0 0 17 43" fill="none" stroke="#333" aria-hidden="true">
              <path d="M7 1H16V14H1V9H7Z" fill="#e9ebcf" stroke="none" />
              <path d="M2 8V4.500H7M5 2L8 4.500L5 7M9 2.500H16M9 5.500H16M10 2V5M15 2V5M12.500 5V10" stroke="#222" />
              <path d="M1.500 11.500H14.500V15.500H1.500ZM4 13.500H7M9 13.500H12" stroke="#555" />
              <path d="M2.500 18.500H13.500V28.500H2.500ZM2 21.500H8M5 19L8 25L11 19M4 27L7 23M9 23L12 27M8 21V25" />
              <path d="M2 32.500H14M2 36.500H14M4.500 31V42M8.500 31V42M12.500 31V41M5 39.500H8M9 34.500H12" />
            </svg>
          </Rail>
          <Desk>
            <FileTabs>
              <FileTab>
                <FileName>
                  现代化医院照明供配电防雷<Latin>...D</Latin>图纸<Latin>.dwg</Latin>
                </FileName>
                <CloseButton aria-label="关闭">
                  <svg width="8" height="8" viewBox="0 0 8 8" stroke="#666" strokeWidth="1.500">
                    <path d="M1 1L7 7M7 1L1 7" />
                  </svg>
                </CloseButton>
              </FileTab>
            </FileTabs>
            <Canvas>
              {sheets.map((s) => (
                <Sheet key={`${s.x}-${s.y}`} {...s} />
              ))}
              {labels.map((l) => (
                <CanvasLabel key={l.text} $x={l.x} $y={l.y}>
                  {l.text}
                </CanvasLabel>
              ))}
              <Crosshair>
                <svg width="48" height="25" viewBox="0 0 48 25" fill="none" shapeRendering="crispEdges" aria-hidden="true">
                  <path d="M19.500 25V19.500H29.500V25" stroke="#00ff80" />
                  <path d="M24.500 0V25M0 24.500H48" stroke="#fff" />
                </svg>
              </Crosshair>
            </Canvas>
            <LayoutBar>
              <Pager>
                {pagers.map(([name, d]) => (
                  <PagerButton key={name} aria-label={name}>
                    <svg width="14" height="15" viewBox="0 0 14 15" fill="#777" stroke="#777">
                      <path d={d} />
                    </svg>
                  </PagerButton>
                ))}
              </Pager>
              {["模型", "布局1", "布局2"].map((name) => (
                <LayoutTab key={name} $active={name === layout} onClick={() => setLayout(name)}>
                  {name}
                </LayoutTab>
              ))}
            </LayoutBar>
            <Splitter />
            <CommandLine>命令行</CommandLine>
          </Desk>
        </Workspace>
      </Shell>
    </>
  );
};

export default App;
